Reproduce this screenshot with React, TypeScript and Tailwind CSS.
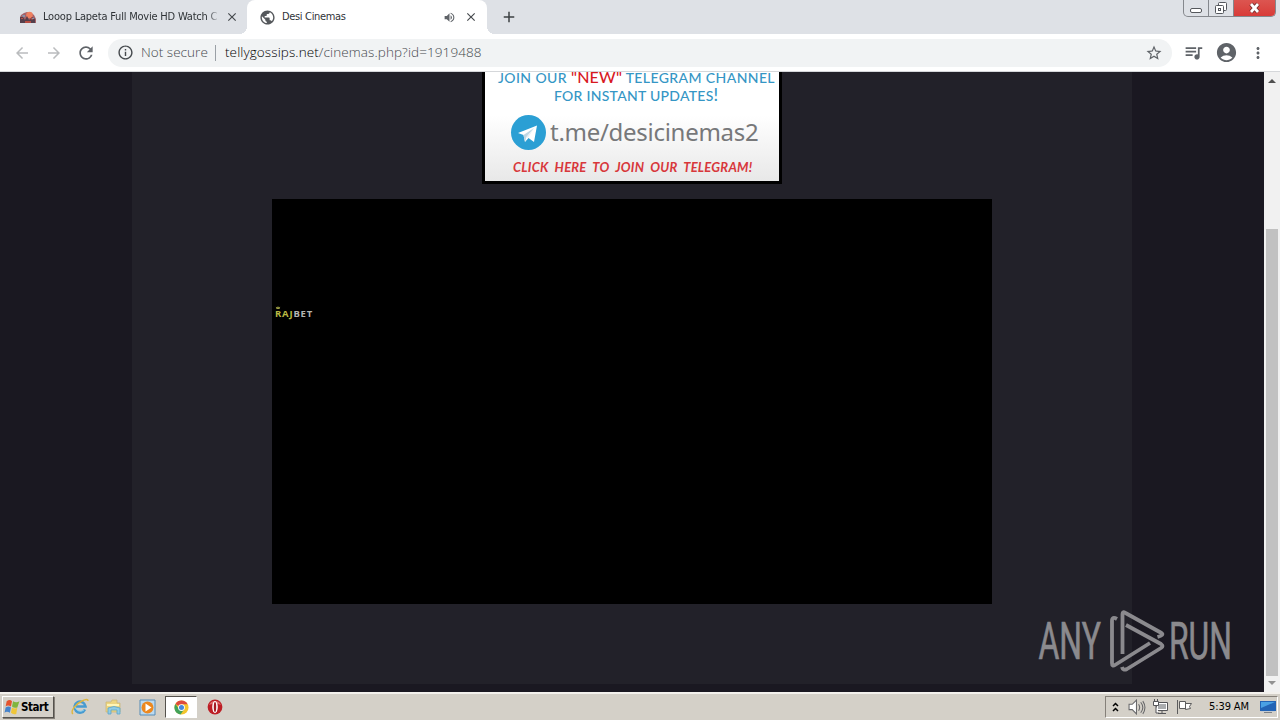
import type { ReactNode } from "react"
import {
  MdAccountCircle,
  MdAdd,
  MdArrowBack,
  MdArrowForward,
  MdClose,
  MdInfoOutline,
  MdMoreVert,
  MdPublic,
  MdQueueMusic,
  MdRefresh,
  MdStarBorder,
  MdVolumeUp,
} from "react-icons/md"

function MovieFavicon() {
  return (
    <svg width="16" height="13" viewBox="0 0 16 13">
      <path d="M1 4l3-2 3-1 3 0 4 3 2 4v4H0V6z" fill="#a5636a" />
      <circle cx="9.5" cy="4" r="3.3" fill="#ee8060" />
      <path d="M0 6h3l2 3 2-4 2 4 3-3 3 2v4H0z" fill="#55404c" />
      <path d="M1 7h2v1H1zM10 8l2-2 1 3zM5 10h6v2H5z" fill="#b84d42" />
      <path d="M2 4h3v2H3zM12 7h2v1h-2z" fill="#8592ab" />
    </svg>
  )
}

function TabStrip() {
  return (
    <div className="flex h-[34px] w-full bg-[#dee1e6] font-['DejaVu_Sans_Condensed','DejaVu_Sans',sans-serif] font-stretch-condensed">
      <div className="flex w-[247px] items-center rounded-br-lg pl-[20px]">
        <MovieFavicon />
        <div className="ml-[7px] w-[177px] pt-px text-[11px] tracking-[-0.21px] whitespace-nowrap text-[#2f3337] [mask-image:linear-gradient(to_right,black_164px,transparent_178px)]">
          Looop Lapeta Full Movie HD Watch C
        </div>
        <MdClose className="ml-[5px] shrink-0 text-[#45494d]" size={14} />
      </div>
      <div className="relative flex w-[240px] items-center rounded-t-lg bg-white pl-[12px]">
        <MdPublic className="shrink-0 text-[#55585c]" size={17} />
        <div className="ml-[6px] w-[161px] pt-px text-[11px] tracking-[-0.34px] text-[#2f3337]">Desi Cinemas</div>
        <MdVolumeUp className="text-[#5f6368]" size={13} />
        <MdClose className="ml-[8px] text-[#45494d]" size={14} />
        <div className="absolute bottom-0 -left-2 h-2 w-2 bg-[radial-gradient(circle_at_0_0,#dee1e6_8px,white_8px)]" />
        <div className="absolute -right-2 bottom-0 h-2 w-2 bg-[radial-gradient(circle_at_100%_0,#dee1e6_8px,white_8px)]" />
      </div>
      <MdAdd className="mt-[8px] ml-[13px] text-[#3c4043]" size={18} />
      <div className="mr-[4px] ml-auto flex h-[17px] overflow-hidden rounded-b-[5px] border border-t-0 border-[#85888d]">
        <div className="flex w-[25px] justify-center border-r border-[#85888d] pt-[8px]">
          <div className="h-[5px] w-[12px] rounded-[2px] border border-[#55585c] bg-white" />
        </div>
        <div className="flex w-[25px] justify-center border-r border-[#85888d]">
          <svg width="15" height="16" viewBox="0 0 15 16" fill="#fff" stroke="#54575d">
            <rect x="4.5" y="2.5" width="8" height="8" rx="1" />
            <rect x="1.5" y="5.5" width="8" height="8" rx="1" />
            <rect x="4.5" y="8.5" width="2" height="2" />
          </svg>
        </div>
        <div className="flex w-[41px] justify-center bg-gradient-to-b from-[#dc5550] to-[#d83b38]">
          <svg width="15" height="16" viewBox="0 0 15 16">
            <path d="M4 4l7 8M11 4l-7 8" stroke="#77302f" strokeWidth="4.5" />
            <path d="M4 4l7 8M11 4l-7 8" stroke="#fff" strokeWidth="2.7" />
          </svg>
        </div>
      </div>
    </div>
  )
}

function Toolbar() {
  return (
    <div className="flex h-[38px] items-center border-b border-[#d5d7da] bg-white pl-[13px] text-[#5f6368]">
      <MdArrowBack className="text-[#babcbe]" size={18} />
      <MdArrowForward className="ml-[14px] text-[#babcbe]" size={18} />
      <MdRefresh className="ml-[13px]" size={20} />
      <div className="ml-[12px] flex h-[28px] w-[1064px] items-center rounded-full bg-[#f1f3f4] pl-[9px] font-['Open_Sans','Noto_Sans',sans-serif] text-[13.5px] font-light text-[#45494d]">
        <MdInfoOutline size={17} />
        <span className="ml-[7px] w-[67px] tracking-[0.04px] whitespace-nowrap">Not secure</span>
        <div className="mr-[9px] ml-[7px] h-[16px] w-px bg-[#9aa0a6]" />
        <span className="tracking-[0.1px] whitespace-nowrap text-black">tellygossips.net</span>
        <span className="tracking-[0.1px] whitespace-nowrap">/cinemas.php?id=1919488</span>
        <MdStarBorder className="mr-[9px] ml-auto text-[#5f6368]" size={18} />
      </div>
      <MdQueueMusic className="ml-[11px]" size={21} />
      <MdAccountCircle className="ml-[11px]" size={23} />
      <MdMoreVert className="ml-[11px]" size={18} />
    </div>
  )
}

function TelegramBanner() {
  return (
    <div className="mx-auto flex h-[112px] w-[300px] flex-col border-x-[3px] border-b-[3px] border-black bg-gradient-to-b from-white from-40% to-[#e8e8e8] font-['Lato','Open_Sans',sans-serif] whitespace-nowrap">
      <div className="-mt-[4px] h-[18px] pl-[13px] text-[14px] leading-[18px] font-medium tracking-[0.4px] text-[#3596c5]">
        JOIN OUR <span className="text-[16px] tracking-[0.2px] text-[#d8191f]">"NEW"</span> TELEGRAM CHANNEL
      </div>
      <div className="h-[18px] pl-[69px] text-[14px] leading-[18px] font-medium tracking-[0.27px] text-[#3596c5]">
        FOR INSTANT UPDATES<span className="text-[17px]">!</span>
      </div>
      <div className="mt-[10px] ml-[25px] flex h-[36px] items-center">
        <svg width="36" height="36" viewBox="0 0 36 36" className="shrink-0">
          <circle cx="18.5" cy="18.5" r="17.5" fill="#2b9fd4" />
          <path d="M8 19L27 11.500 24 28 18.500 24 15 28 13.500 21z" fill="#fff" />
          <path d="M13.500 21L24 14 16.500 23 15 28z" fill="#bfd7e4" />
          <path d="M16.500 23L24 14 18 24z" fill="#e7f1f6" />
        </svg>
        <span className="ml-[4px] font-['Noto_Sans',sans-serif] text-[24px] leading-[32px] tracking-[-0.28px] text-[#77787a]">t.me/desicinemas2</span>
      </div>
      <div className="mt-[8px] pl-[28px] text-[13px] leading-[18px] font-bold tracking-[0.22px] text-[#d8373b] italic [word-spacing:3px]">
        CLICK HERE TO JOIN OUR TELEGRAM!
      </div>
    </div>
  )
}

function Player() {
  return (
    <div className="mx-auto mt-[15px] h-[405px] w-[720px] bg-black pt-[107px] pl-[3px]">
      <svg width="6" height="3" viewBox="0 0 6 4">
        <path d="M0 1l2 1 1-2 1 2 2-1-1 3H1z" fill="#9fa044" />
      </svg>
      <div className="font-['Open_Sans',sans-serif] text-[9.5px] leading-[10px] font-bold tracking-[0.8px] text-[#b4b5b2]">
        <span className="text-[#b9ba43]">RAJ</span>BET
      </div>
    </div>
  )
}

function Scrollbar() {
  return (
    <div className="flex w-[16px] flex-col items-center bg-[#f1f1f1]">
      <svg width="16" height="17" viewBox="0 0 16 17">
        <path d="M4 11l4-4 4 4z" fill="#505050" />
      </svg>
      <div className="mt-[140px] h-[447px] w-[12px] bg-[#c1c1c1]" />
      <svg width="16" height="16" viewBox="0 0 16 16">
        <path d="M4 5l4 4 4-4z" fill="#929292" />
      </svg>
    </div>
  )
}

function Watermark() {
  return (
    <svg className="absolute top-[536px] left-[1034px]" width="204" height="68" viewBox="1034 608 204 68">
      <g fill="#8b8a8e" stroke="#8b8a8e" strokeWidth=".7" fontFamily="Roboto, sans-serif" fontSize="51">
        <text transform="translate(1038.500 659) scale(.7 1)" textLength="89" lengthAdjust="spacingAndGlyphs">ANY</text>
        <text transform="translate(1169 659) scale(.7 1)" textLength="90" lengthAdjust="spacingAndGlyphs">RUN</text>
      </g>
      <g fill="none" stroke="#8b8a8e" strokeWidth="3.8" strokeLinejoin="round">
        <path d="M1117 619q-5-3-5 2v42q0 4 3 2l35-22" />
        <path d="M1122.500 654v-40q0-3 3-1l36 20q3 2-4 4" />
        <path d="M1126 625l35 19q3 2 0 4l-34 21q-4 2-5-2" />
      </g>
    </svg>
  )
}

function WindowsFlag() {
  return (
    <svg width="18" height="17" viewBox="0 0 16 16" className="shrink-0">
      <path d="M3 2q3-2 5 0L7 7q-3-2-5 0z" fill="#e5532d" />
      <path d="M9 2q3 2 6 0l-2 6q-3 1-5-1z" fill="#80b53d" />
      <path d="M2 8q3-2 5 0l-1 5q-3-2-5 0z" fill="#4683cb" />
      <path d="M8 8q3 2 5 0l-1 6q-3 1-5-1z" fill="#efc639" />
    </svg>
  )
}

function ExplorerIcon() {
  return (
    <svg width="18" height="18" viewBox="0 0 18 18" fill="none">
      <path d="M14 11.500A5.500 5.500 0 1 1 14.500 8.500H5" stroke="#489bd0" strokeWidth="2.6" />
      <path d="M13 12A5.500 5.500 0 0 1 4 8" stroke="#8bd0ef" strokeWidth="1" />
      <path d="M2 16C-1 14 4 6 11 3q6-3 6 0" stroke="#dfb63f" strokeWidth="1.5" />
    </svg>
  )
}

function FolderIcon() {
  return (
    <svg width="17" height="17" viewBox="0 0 17 17">
      <path d="M1 3h5l1-2h5v3h3v9H1z" fill="#edd581" stroke="#c9b572" strokeWidth=".7" />
      <path d="M2 5h12v2H2z" fill="#fff5b6" />
      <path d="M3 15V9q6-3 12 0v6h-3v-4H6v4z" fill="#91cce5" stroke="#5ba5c9" strokeWidth=".8" />
    </svg>
  )
}

function MediaIcon() {
  return (
    <svg width="17" height="17" viewBox="0 0 17 17">
      <path d="M1 1h15v15H1z" fill="#bcdaf0" stroke="#568cb6" />
      <circle cx="8.5" cy="8.5" r="6" fill="#ec881f" />
      <path d="M6.500 4.500l6 4-6 4z" fill="#fff" />
    </svg>
  )
}

function ChromeIcon() {
  return (
    <svg width="15" height="15" viewBox="0 0 16 16">
      <circle cx="8" cy="8" r="7.5" fill="#f3c52d" />
      <path d="M8 8L1.500 4.200A7.500 7.500 0 0 1 14.500 4.500H8z" fill="#dd4b3e" />
      <path d="M1.500 4.200A7.500 7.500 0 0 0 7 15.500L11 9.500 5 9z" fill="#42a25a" />
      <circle cx="8" cy="8" r="3.6" fill="#fff" />
      <circle cx="8" cy="8" r="2.7" fill="#4688dc" />
    </svg>
  )
}

function OperaIcon() {
  return (
    <svg width="16" height="16" viewBox="0 0 16 16">
      <circle cx="8" cy="8" r="7.4" fill="#bd1e25" />
      <path d="M2 6a6.500 6.500 0 0 1 12 0q-6-3-12 0" fill="#df6969" />
      <ellipse cx="8" cy="8" rx="2.8" ry="6" fill="#fff" />
      <ellipse cx="8" cy="8" rx="1.2" ry="5" fill="#a51b23" />
    </svg>
  )
}

function Launcher({ children }: { children: ReactNode }) {
  return <div className="flex h-[22px] w-[34px] items-center justify-center pr-px">{children}</div>
}

function SystemTray() {
  return (
    <div className="mr-[2px] ml-auto flex h-[22px] w-[173px] items-center border border-t-[#858079] border-r-white border-b-white border-l-[#858079] pl-[6px] text-black">
      <svg width="7" height="11" viewBox="0 0 7 11" fill="none" stroke="#000" strokeWidth="1.5">
        <path d="M1 4l2.500-2.500L6 4M1 9l2.500-2.500L6 9" />
      </svg>
      <svg className="ml-[9px]" width="18" height="17" viewBox="0 0 17 16" fill="#fff" stroke="#69696b">
        <path d="M1 5h3l4-4v13l-4-4H1z" />
        <path d="M10 5q2 3 0 6M12 3q4 5 0 10M14 2q4 6 0 12" fill="none" />
      </svg>
      <svg className="ml-[6px]" width="17" height="16" viewBox="0 0 17 16" fill="#fff" stroke="#555558">
        <path d="M4.500 3.500h11v8h-11zM6 14.500h8M10 11.500v3" />
        <path d="M6 5h8v5H6z" fill="#aaacae" stroke="none" />
        <path d="M1.500 2.500h5v4h-5zM2.500 0v2M5.500 0v2M4 7v7h3" />
      </svg>
      <svg className="ml-[7px]" width="17" height="16" viewBox="0 0 17 16" fill="#fff" stroke="#5c5c5d">
        <path d="M1.500 1v14M3.500 2.500h6v7h-6zM9.500 4.500h6l-2 3 1 2-5 1z" />
      </svg>
      <span className="ml-[16px] w-[42px] pt-px font-['DejaVu_Sans_Condensed','DejaVu_Sans',sans-serif] text-[11px] tracking-[-0.1px] whitespace-nowrap font-stretch-condensed">5:39 AM</span>
      <svg className="ml-[9px] shrink-0" width="16" height="14" viewBox="0 0 16 14">
        <path d="M0 1h16v10H0z" fill="#2364b5" />
        <path d="M1 2h14L1 8z" fill="#4aa1e4" />
        <path d="M1 11h14v1H1z" fill="#c6cbd0" />
        <path d="M4 12h8v1H4z" fill="#7b8086" />
      </svg>
    </div>
  )
}

function Taskbar() {
  return (
    <div className="flex h-[28px] items-center border-t-2 border-[#f3f1ed] bg-[#d4d0c8] pl-[2px]">
      <div className="flex h-[22px] w-[52px] items-center border border-t-white border-r-[#55524d] border-b-[#55524d] border-l-white shadow-[1px_1px_0_#858079]">
        <WindowsFlag />
        <span className="pt-px font-['DejaVu_Sans_Condensed','DejaVu_Sans',sans-serif] text-[11.5px] font-bold tracking-[-0.45px] text-black font-stretch-condensed">Start</span>
      </div>
      <div className="ml-[9px] flex">
        <Launcher><ExplorerIcon /></Launcher>
        <Launcher><FolderIcon /></Launcher>
        <Launcher><MediaIcon /></Launcher>
        <div className="flex h-[22px] w-[32px] items-center justify-center border border-t-[#55524d] border-r-white border-b-white border-l-[#55524d] bg-white">
          <ChromeIcon />
        </div>
        <div className="flex h-[22px] w-[36px] items-center justify-center">
          <OperaIcon />
        </div>
      </div>
      <SystemTray />
    </div>
  )
}

export default function App() {
  return (
    <div className="flex h-[720px] w-[1280px] flex-col overflow-hidden font-['Noto_Sans',sans-serif]">
      <TabStrip />
      <Toolbar />
      <div className="relative flex h-[620px] overflow-hidden bg-[#1a1821]">
        <div className="flex-1">
          <div className="mx-auto h-[612px] w-[1000px] bg-[#222129]">
            <TelegramBanner />
            <Player />
          </div>
        </div>
        <Scrollbar />
        <Watermark />
      </div>
      <Taskbar />
    </div>
  )
}
